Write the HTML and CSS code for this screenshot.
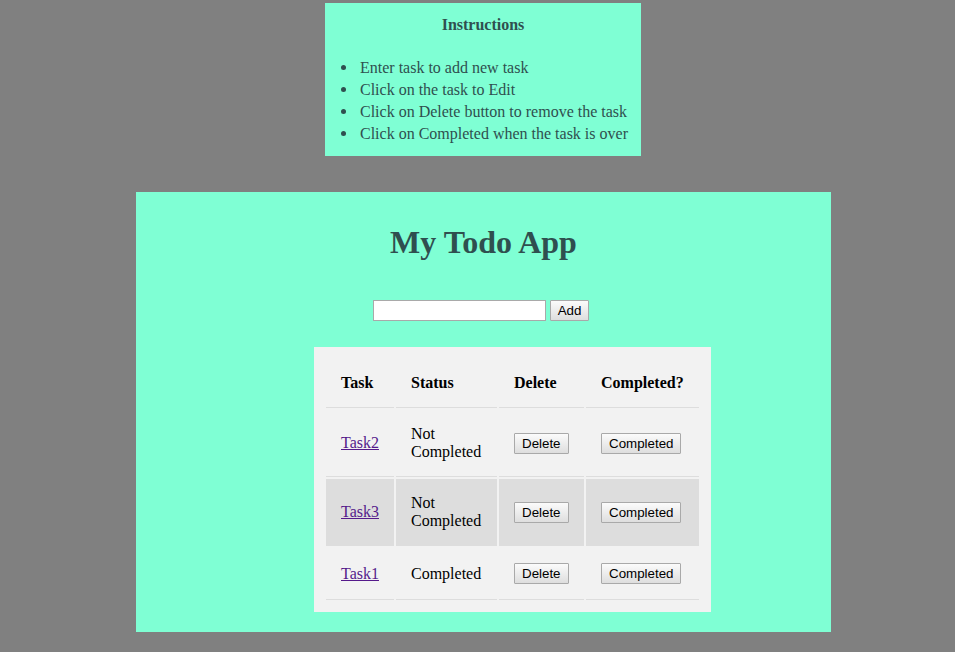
FILE: index.html
```html
<!DOCTYPE html>
<html>
<head>
<meta charset="utf-8">
<title>My Todo App</title>
<link rel="stylesheet" href="styles.css">
</head>
<body>
<div class="instructions">
  <div class="instr-title">Instructions</div>
  <ul class="instr-list">
    <li>Enter task to add new task</li>
    <li>Click on the task to Edit</li>
    <li>Click on Delete button to remove the task</li>
    <li>Click on Completed when the task is over</li>
  </ul>
</div>
<div class="app">
  <h1 class="app-title">My Todo App</h1>
  <div class="add-row">
    <input class="task-input" type="text">
    <button class="btn">Add</button>
  </div>
  <table class="tasks">
    <thead>
      <tr>
        <th class="col-task">Task</th>
        <th class="col-status">Status</th>
        <th class="col-del">Delete</th>
        <th class="col-done">Completed?</th>
      </tr>
    </thead>
    <tbody>
      <tr>
        <td><a class="task-link" href="#">Task2</a></td>
        <td>Not Completed</td>
        <td><button class="btn">Delete</button></td>
        <td><button class="btn">Completed</button></td>
      </tr>
      <tr class="row-hover">
        <td><a class="task-link" href="#">Task3</a></td>
        <td>Not Completed</td>
        <td><button class="btn">Delete</button></td>
        <td><button class="btn">Completed</button></td>
      </tr>
      <tr>
        <td><a class="task-link" href="#">Task1</a></td>
        <td>Completed</td>
        <td><button class="btn">Delete</button></td>
        <td><button class="btn">Completed</button></td>
      </tr>
    </tbody>
  </table>
</div>
</body>
</html>
```
FILE: styles.css
```css
html, body {
  margin: 0;
  padding: 0;
}
body {
  background: #808080;
  font-family: "Liberation Serif", "Times New Roman", serif;
  font-size: 16px;
  padding-top: 3px;
  min-height: 652px;
  box-sizing: border-box;
}
.instructions {
  width: 316px;
  margin-left: 325px;
  background: #7fffd4;
  color: #2f4f4f;
  padding: 13px 0 11px 0;
  box-sizing: border-box;
  height: 153px;
}
.instr-title {
  font-weight: bold;
  text-align: center;
}
.instr-list {
  margin: 23px 0 0 0;
  padding-left: 35px;
  line-height: 22px;
  list-style: none;
}
.instr-list li::before {
  content: "";
  display: inline-block;
  width: 5px;
  height: 5px;
  border-radius: 50%;
  background: #2f4f4f;
  margin-left: -19px;
  margin-right: 14px;
  vertical-align: 3px;
}
.app {
  width: 695px;
  height: 440px;
  margin: 36px 0 0 136px;
  background: #7fffd4;
  padding-top: 32px;
  box-sizing: border-box;
}
.app-title {
  margin: 0;
  font-size: 32px;
  font-weight: bold;
  text-align: center;
  color: #2f4f4f;
  line-height: 36px;
}
.add-row {
  display: flex;
  justify-content: center;
  gap: 4px;
  margin-top: 40px;
  padding-right: 5px;
}
.task-input {
  width: 173px;
  height: 21px;
  box-sizing: border-box;
  border: 1px solid #a9a9a9;
  background: #fff;
  margin: 0;
  padding: 1px 2px;
  font-family: "Liberation Sans", Arial, sans-serif;
  font-size: 13.33px;
}
.btn {
  font-family: "Liberation Sans", Arial, sans-serif;
  font-size: 13.33px;
  line-height: 15px;
  padding: 2px 7px;
  margin: 0;
  border: 1px solid #a9a9a9;
  border-radius: 1px;
  background: linear-gradient(#fbfbfb, #dedede);
  color: #000;
  height: 21px;
  box-sizing: border-box;
}
.tasks {
  margin: 26px 0 0 178px;
  background: #f2f2f2;
  padding: 10px;
  border-spacing: 2px;
  table-layout: fixed;
  width: 397px;
  color: #000;
}
.tasks th,
.tasks td {
  padding: 15px;
  text-align: left;
  vertical-align: middle;
  border-bottom: 1px solid #dddddd;
  line-height: 18px;
}
.tasks th {
  font-weight: bold;
}
.col-task { width: 38px; }
.col-status { width: 71px; }
.col-del { width: 55px; }
.col-done { width: 83px; }
.row-hover td {
  background: #dddddd;
}
.task-link {
  color: #551a8b;
  text-decoration: underline;
}
```
